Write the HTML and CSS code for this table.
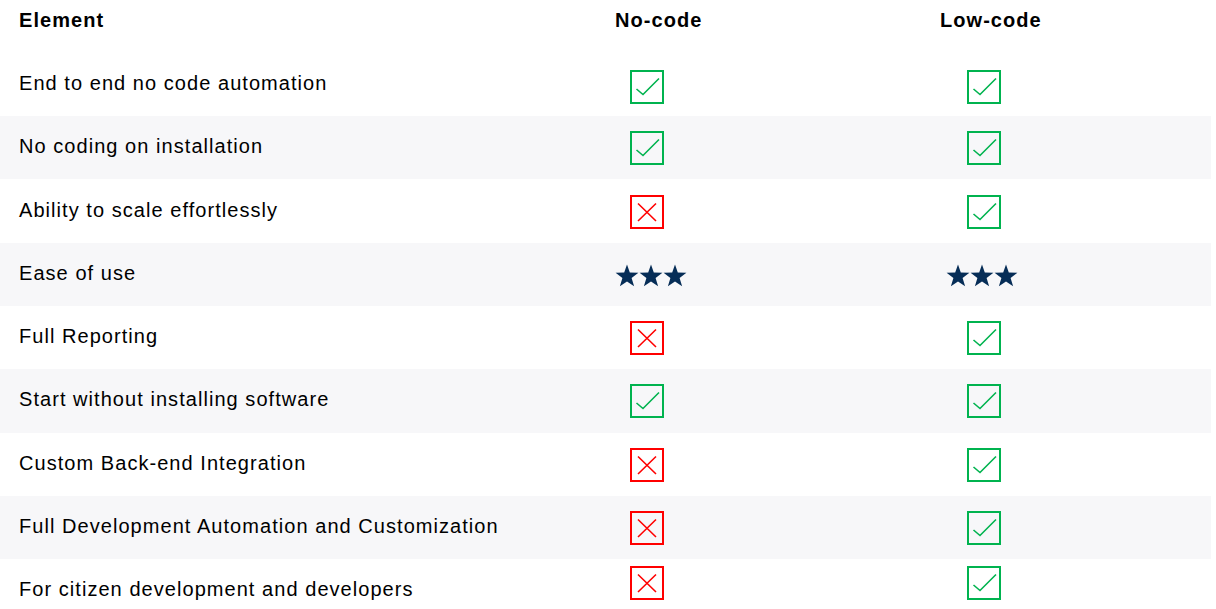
FILE: index.html
```html
<!DOCTYPE html>
<html>
<head>
<meta charset="utf-8">
<link rel="stylesheet" href="styles.css">
</head>
<body>
<svg width="0" height="0" class="defs">
  <defs>
    <symbol id="yes" viewBox="0 0 34 34">
      <rect x="1" y="1" width="32" height="32" fill="none" stroke="#00b34f" stroke-width="2"/>
      <path d="M6.5 19 L13 24.5 L29 8.5" fill="none" stroke="#00b34f" stroke-width="1.6"/>
    </symbol>
    <symbol id="no" viewBox="0 0 34 34">
      <rect x="1" y="1" width="32" height="32" fill="none" stroke="#ff0000" stroke-width="2"/>
      <path d="M8 8.5 L26 26 M26 8.5 L8 26" fill="none" stroke="#ff0000" stroke-width="1.6"/>
    </symbol>
    <symbol id="star" viewBox="0 0 24 23">
      <path d="M12 0.5 L14.8 8.6 L23.4 8.8 L16.6 14 L19.1 22.3 L12 17.4 L4.9 22.3 L7.4 14 L0.6 8.8 L9.2 8.6 Z" fill="#062d57"/>
    </symbol>
  </defs>
</svg>
<div class="table">
  <div class="row head">
    <div class="cell c1">Element</div>
    <div class="cell c2">No-code</div>
    <div class="cell c3">Low-code</div>
  </div>
  <div class="row first">
    <div class="cell c1">End to end no code automation</div>
    <div class="cell c2"><svg class="ic"><use href="#yes"/></svg></div>
    <div class="cell c3"><svg class="ic"><use href="#yes"/></svg></div>
  </div>
  <div class="row">
    <div class="cell c1">No coding on installation</div>
    <div class="cell c2"><svg class="ic"><use href="#yes"/></svg></div>
    <div class="cell c3"><svg class="ic"><use href="#yes"/></svg></div>
  </div>
  <div class="row">
    <div class="cell c1">Ability to scale effortlessly</div>
    <div class="cell c2"><svg class="ic"><use href="#no"/></svg></div>
    <div class="cell c3"><svg class="ic"><use href="#yes"/></svg></div>
  </div>
  <div class="row">
    <div class="cell c1">Ease of use</div>
    <div class="cell c2"><span class="stars"><svg class="st"><use href="#star"/></svg><svg class="st"><use href="#star"/></svg><svg class="st"><use href="#star"/></svg></span></div>
    <div class="cell c3"><span class="stars"><svg class="st"><use href="#star"/></svg><svg class="st"><use href="#star"/></svg><svg class="st"><use href="#star"/></svg></span></div>
  </div>
  <div class="row">
    <div class="cell c1">Full Reporting</div>
    <div class="cell c2"><svg class="ic"><use href="#no"/></svg></div>
    <div class="cell c3"><svg class="ic"><use href="#yes"/></svg></div>
  </div>
  <div class="row">
    <div class="cell c1">Start without installing software</div>
    <div class="cell c2"><svg class="ic"><use href="#yes"/></svg></div>
    <div class="cell c3"><svg class="ic"><use href="#yes"/></svg></div>
  </div>
  <div class="row">
    <div class="cell c1">Custom Back-end Integration</div>
    <div class="cell c2"><svg class="ic"><use href="#no"/></svg></div>
    <div class="cell c3"><svg class="ic"><use href="#yes"/></svg></div>
  </div>
  <div class="row">
    <div class="cell c1">Full Development Automation and Customization</div>
    <div class="cell c2"><svg class="ic"><use href="#no"/></svg></div>
    <div class="cell c3"><svg class="ic"><use href="#yes"/></svg></div>
  </div>
  <div class="row last">
    <div class="cell c1">For citizen development and developers</div>
    <div class="cell c2"><svg class="ic"><use href="#no"/></svg></div>
    <div class="cell c3"><svg class="ic"><use href="#yes"/></svg></div>
  </div>
</div>
</body>
</html>
```

FILE: styles.css
```css
html, body {
  margin: 0;
  padding: 0;
  background: #ffffff;
}
body {
  font-family: "Liberation Sans", Arial, sans-serif;
  font-size: 20px;
  letter-spacing: 1.05px;
  color: #000000;
  overflow: hidden;
}
.defs {
  position: absolute;
  width: 0;
  height: 0;
}
.table {
  width: 1211px;
}
.row {
  display: grid;
  grid-template-columns: 596px 325px 290px;
  height: 63.33px;
}
.row:nth-child(odd) {
  background: #f7f7f9;
}
.row.head {
  height: 52.7px;
  background: #ffffff;
  font-weight: bold;
}
.cell {
  display: flex;
  align-items: center;
  padding-left: 19px;
  padding-bottom: 2px;
}
.head .cell {
  padding-bottom: 12px;
}
.ic {
  width: 34px;
  height: 34px;
  display: block;
  margin-top: 3px;
}
.first .ic {
  margin-top: 8px;
}
.last .ic {
  margin-top: -13px;
}
.c2 .ic {
  margin-left: 15px;
}
.c3 .ic {
  margin-left: 27px;
}
.stars {
  display: flex;
  margin-top: 5px;
}
.st {
  width: 24px;
  height: 23px;
  display: block;
}
.c3 .stars {
  margin-left: 6px;
}
```
